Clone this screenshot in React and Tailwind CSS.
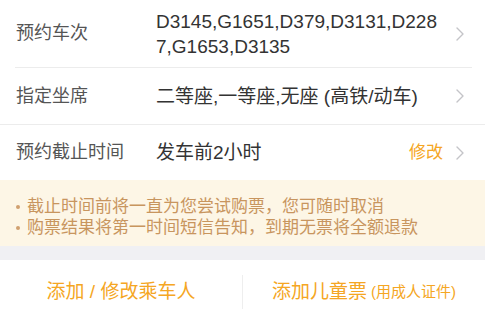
const Chevron = () => (
    <svg width="8" height="14" viewBox="0 0 8 14" fill="none" className="shrink-0">
        <path d="M1 1l6 6-6 6" stroke="#c4c4c8" strokeWidth="1.4" strokeLinecap="round" strokeLinejoin="round" />
    </svg>
);

const Row = ({ label, children, right, className }) => (
    <div className={`flex items-center pl-[16px] pr-[21px] ${className}`}>
        <div className="w-[140px] shrink-0 text-[18px] text-[#555555]">{label}</div>
        <div className="flex-1 min-w-0 pr-[12px] text-[19px] leading-[25px] text-[#333333] break-all">{children}</div>
        {right}
        <Chevron />
    </div>
);

const Tip = ({ children }) => (
    <div className="flex items-center">
        <span className="w-[4px] h-[4px] rounded-full bg-[#d0a070] mr-[7px] shrink-0" />
        <span>{children}</span>
    </div>
);

const App = () => {
    return (
        <div
            className="w-[491px] h-[309px] overflow-hidden bg-white"
            style={{ fontFamily: '"Liberation Sans", "Noto Sans CJK SC", sans-serif' }}
        >
            <div className="w-[485px]">
                <Row label="预约车次" className="h-[67px]">
                    D3145,G1651,D379,D3131,D2287,G1653,D3135
                </Row>
                <div className="h-px bg-[#ececec] ml-[15px] mr-[13px]" />
                <Row label="指定坐席" className="h-[56px]">
                    二等座,一等座,无座 (高铁/动车)
                </Row>
                <div className="h-px bg-[#ececec]" />
                <Row
                    label="预约截止时间"
                    className="h-[55px]"
                    right={<span className="mr-[13px] text-[17px] text-[#f5a623]">修改</span>}
                >
                    发车前2小时
                </Row>

                {/* tips */}
                <div className="bg-[#fdf6e6] h-[66px] pl-[16px] pt-[16px] text-[17px] leading-[21px] text-[#c8955e]">
                    <Tip>截止时间前将一直为您尝试购票，您可随时取消</Tip>
                    <Tip>购票结果将第一时间短信告知，到期无票将全额退款</Tip>
                </div>
                <div className="h-[14px] bg-[#f0f0f3]" />

                <div className="flex h-[64px] items-stretch">
                    <div className="flex-1 flex items-center justify-center text-[19px] text-[#f5a623]">
                        添加 / 修改乘车人
                    </div>
                    <div className="w-px bg-[#eeeeee] mt-[15px]" />
                    <div className="flex-1 flex items-center justify-center text-[#f5a623]">
                        <span className="text-[19px]">添加儿童票</span>
                        <span className="text-[15px] ml-[4px]">(用成人证件)</span>
                    </div>
                </div>
            </div>
        </div>
    );
};

export default App;
